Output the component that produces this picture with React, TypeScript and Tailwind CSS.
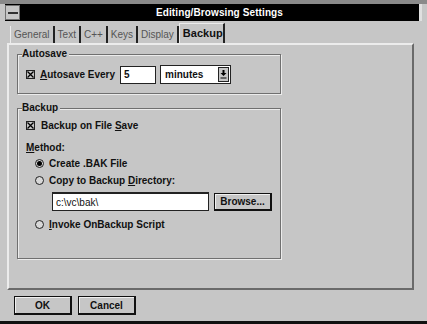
import React from "react";

const font = { fontFamily: '"Liberation Sans", Arial, sans-serif' };

function Check({ checked }: { checked?: boolean }) {
    return (
        <span className="w-[9px] h-[9px] border border-[#202020] bg-[#c6c6c6] flex items-center justify-center shrink-0">
            {checked && (
                <svg width="7" height="7" viewBox="0 0 7 7">
                    <path d="M0.5 0.5 L6.5 6.5 M6.5 0.5 L0.5 6.5" stroke="#000" strokeWidth="1.3" />
                </svg>
            )}
        </span>
    );
}

function Radio({ checked }: { checked?: boolean }) {
    return (
        <span className="w-[9px] h-[9px] rounded-full border border-[#202020] bg-[#d8d8d8] flex items-center justify-center shrink-0">
            {checked && <span className="w-[5px] h-[5px] rounded-full bg-black" />}
        </span>
    );
}

function Group({ label, className, children }: { label: string; className: string; children: React.ReactNode }) {
    return (
        <div className={`border border-[#707070] shadow-[inset_1px_1px_0_#ececec,1px_1px_0_#ececec] ${className}`}>
            <div className="-mt-[7px] ml-[4px] w-fit bg-[#c6c6c6] pr-[2px] text-[10px] leading-[12px] font-bold">{label}</div>
            {children}
        </div>
    );
}

export default function App() {
    const tabs = ["General", "Text", "C++", "Keys", "Display"];
    return (
        <div className="w-[427px] h-[324px] bg-[#c6c6c6] border-t-[4px] border-t-[#8a8a8a] border-b-[3px] border-b-[#111] text-[#111] flex flex-col" style={font}>
            <div className="mx-[5px] h-[17px] bg-black flex items-center border-r-[3px] border-r-[#e0e0e0]">
                <div className="w-[15px] h-[15px] bg-[#c6c6c6] border border-[#707070] flex items-center justify-center">
                    <span className="w-[10px] h-[2px] bg-[#303030]" />
                </div>
                <div className="flex-1 text-center text-white font-bold text-[10px] tracking-[0.1px]">Editing/Browsing Settings</div>
            </div>

            <div className="flex items-end h-[21px] pl-[10px] mt-[1px]">
                {tabs.map((t, i) => (
                    <div key={t} className={`h-[17px] flex items-center px-[3px] text-[10px] text-[#555] border-r-[2px] border-r-[#222] ${i === 0 ? "border-l border-l-[#ececec]" : ""}`}>
                        {t}
                    </div>
                ))}
                <div className="h-[20px] px-[3px] flex items-center text-[11px] font-bold border-t border-l border-[#ececec] border-r-[2px] border-r-[#222] w-[46px]">
                    Backup
                </div>
            </div>

            <div className="ml-[7px] w-[407px] h-[247px] border-t-[2px] border-l-[2px] border-[#ececec] border-r-[2px] border-r-[#6a6a6a] border-b-[2px] border-b-[#6a6a6a] pl-[8px] pt-[9px] flex flex-col">
                <Group label="Autosave" className="w-[264px] h-[40px]">
                    <div className="flex items-center mt-[5px] pl-[8px]">
                        <Check checked />
                        <span className="ml-[5px] text-[10px] font-bold w-[80px]"><u>A</u>utosave Every</span>
                        <div className="w-[36px] h-[18px] bg-white border border-[#222] text-[10px] font-bold flex items-center pl-[3px]">5</div>
                        <div className="ml-[4px] w-[71px] h-[19px] bg-white border border-[#222] flex items-center pl-[4px] text-[10px] font-bold">
                            <span className="flex-1">minutes</span>
                            <span className="w-[11px] h-[15px] mr-[1px] border border-[#222] bg-[#c6c6c6] flex items-center justify-center">
                                <svg width="7" height="9" viewBox="0 0 7 9">
                                    <path d="M2.5 0 H4.5 V3 H6.5 L3.5 6 L0.5 3 H2.5 Z" fill="#000" />
                                    <path d="M0.5 8 H6.5" stroke="#000" strokeWidth="1" />
                                </svg>
                            </span>
                        </div>
                    </div>
                </Group>

                <Group label="Backup" className="w-[264px] h-[151px] mt-[14px]">
                    <div className="flex flex-col pl-[8px] text-[10px] font-bold">
                        <div className="flex items-center mt-[4px]">
                            <Check checked />
                            <span className="ml-[6px]">Backup on File <u>S</u>ave</span>
                        </div>
                        <div className="mt-[7px]"><u>M</u>ethod:</div>
                        <div className="flex items-center mt-[1px] pl-[9px]">
                            <Radio checked />
                            <span className="ml-[5px]">Create .BAK File</span>
                        </div>
                        <div className="flex items-center mt-[2px] pl-[9px]">
                            <Radio />
                            <span className="ml-[5px]">Copy to Backup <u>D</u>irectory:</span>
                        </div>
                        <div className="flex items-center mt-[4px] pl-[26px]">
                            <div className="w-[157px] h-[19px] bg-white border border-[#222] border-t-[2px] flex items-center pl-[3px] font-normal text-[10px]">c:\vc\bak\</div>
                            <button className="ml-[5px] w-[58px] h-[18px] border border-[#111] border-r-[2px] border-b-[2px] shadow-[inset_1px_1px_0_#f0f0f0] bg-[#c6c6c6] text-[10px] font-bold">Browse...</button>
                        </div>
                        <div className="flex items-center mt-[6px] pl-[9px]">
                            <Radio />
                            <span className="ml-[5px]"><u>I</u>nvoke OnBackup Script</span>
                        </div>
                    </div>
                </Group>
            </div>

            <div className="flex gap-[6px] pl-[14px] mt-[6px]">
                <button className="w-[58px] h-[19px] border border-[#111] border-r-[2px] border-b-[2px] shadow-[inset_1px_1px_0_#f0f0f0] bg-[#c6c6c6] text-[10px] font-bold">OK</button>
                <button className="w-[58px] h-[19px] border border-[#111] border-r-[2px] border-b-[2px] shadow-[inset_1px_1px_0_#f0f0f0] bg-[#c6c6c6] text-[10px] font-bold">Cancel</button>
            </div>
        </div>
    );
}
